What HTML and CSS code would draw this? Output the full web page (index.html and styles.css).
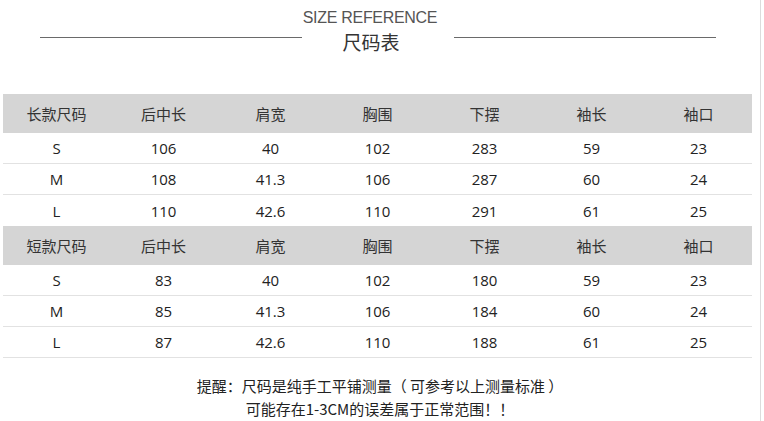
FILE: index.html
```html
<!DOCTYPE html>
<html lang="zh">
<head>
<meta charset="utf-8">
<link rel="stylesheet" href="styles.css">
</head>
<body>
<div class="page">
  <div class="title">
    <div class="line"></div>
    <div class="title-text">
      <div class="en">SIZE REFERENCE</div>
      <div class="cn">尺码表</div>
    </div>
    <div class="line"></div>
  </div>
  <table class="sizes">
    <tr class="head"><td>长款尺码</td><td>后中长</td><td>肩宽</td><td>胸围</td><td>下摆</td><td>袖长</td><td>袖口</td></tr>
    <tr><td>S</td><td>106</td><td>40</td><td>102</td><td>283</td><td>59</td><td>23</td></tr>
    <tr><td>M</td><td>108</td><td>41.3</td><td>106</td><td>287</td><td>60</td><td>24</td></tr>
    <tr class="last"><td>L</td><td>110</td><td>42.6</td><td>110</td><td>291</td><td>61</td><td>25</td></tr>
    <tr class="head"><td>短款尺码</td><td>后中长</td><td>肩宽</td><td>胸围</td><td>下摆</td><td>袖长</td><td>袖口</td></tr>
    <tr><td>S</td><td>83</td><td>40</td><td>102</td><td>180</td><td>59</td><td>23</td></tr>
    <tr><td>M</td><td>85</td><td>41.3</td><td>106</td><td>184</td><td>60</td><td>24</td></tr>
    <tr><td>L</td><td>87</td><td>42.6</td><td>110</td><td>188</td><td>61</td><td>25</td></tr>
  </table>
  <div class="note">
    <p>提醒：尺码是纯手工平铺测量（ 可参考以上测量标准 ）</p>
    <p>可能存在1-3CM的误差属于正常范围！！</p>
  </div>
</div>
</body>
</html>
```
FILE: styles.css
```css
html, body {
  margin: 0;
  padding: 0;
  background: #fff;
}
.page {
  width: 760px;
  height: 421px;
  border-right: 1px solid #dcdcdc;
  font-family: "Open Sans", "Noto Sans CJK SC", sans-serif;
  color: #333;
  overflow: hidden;
}
.title {
  display: flex;
  align-items: flex-start;
  padding: 9px 0 0 40px;
}
.line {
  width: 262px;
  height: 1px;
  background: #6a6a6a;
  margin-top: 28px;
}
.title-text {
  width: 152px;
  text-align: center;
  padding-right: 16px;
  box-sizing: border-box;
}
.en {
  font-family: "Liberation Sans", sans-serif;
  font-size: 16px;
  line-height: 18px;
  color: #555;
  letter-spacing: -0.3px;
}
.cn {
  font-family: "Noto Sans CJK SC", sans-serif;
  font-size: 19px;
  line-height: 24px;
  color: #333;
  margin-top: 3px;
  margin-left: 2px;
}
.sizes {
  margin: 40px 0 0 3px;
  width: 749px;
  border-collapse: collapse;
  table-layout: fixed;
  font-size: 15px;
}
.sizes td {
  text-align: center;
  height: 30px;
  padding: 0;
  border-bottom: 1px solid #e2e2e2;
  color: #222;
}
.sizes tr.head td {
  background: #d5d5d5;
  height: 39px;
  border-bottom: none;
  color: #333;
}
.sizes tr.last td {
  border-bottom: none;
  height: 31px;
}
.note {
  margin-top: 16px;
  text-align: center;
  font-family: "Noto Sans CJK SC", sans-serif;
  font-size: 15px;
  line-height: 23px;
  color: #222;
}
.note p {
  margin: 0;
}
.note .num {
  font-family: "Open Sans", sans-serif;
}
```
